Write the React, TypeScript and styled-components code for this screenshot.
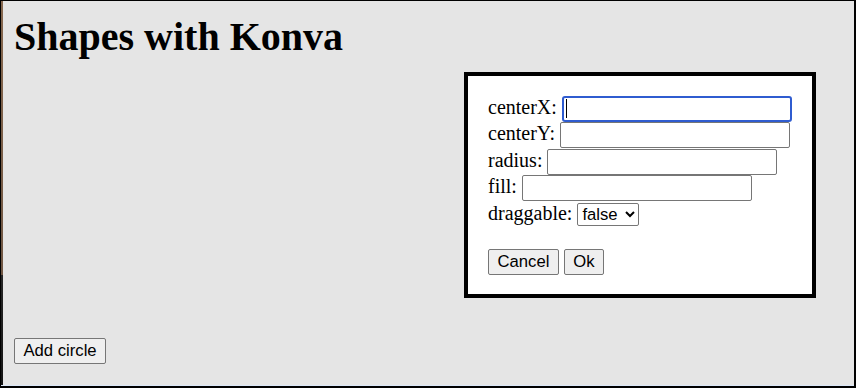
import React from 'react'
import styled, { createGlobalStyle } from 'styled-components'

const GlobalStyle = createGlobalStyle`
  html, body {
    margin: 0;
    padding: 0;
    height: 100%;
  }
  body {
    background: #e5e5e5;
    font-family: 'Liberation Serif', 'Times New Roman', serif;
    color: #000;
  }
`

const Frame = styled.div`
  box-sizing: border-box;
  height: 100vh;
  padding: 14px 11px 0 13px;
  border-top: 1px solid #000;
  border-left: 1px solid #000;
  border-right: 2px solid #000;
  border-bottom: 2px solid #000;
  box-shadow: inset 0 -1px 0 #dbe7f7;
  background:
    linear-gradient(to bottom, #86684f 0, #6f5643 274px, #262626 274px, #141414 100%) left top / 2px 100% no-repeat,
    #e5e5e5;
`

const Title = styled.h1`
  margin: 0;
  font-size: 40px;
  line-height: 44px;
  font-weight: bold;
`

const Stage = styled.div`
  position: relative;
  height: 279px;
`

const Dialog = styled.form`
  position: absolute;
  top: 13px;
  left: 450px;
  box-sizing: border-box;
  width: 352px;
  padding: 20px 20px 19px;
  border: 4px solid #000;
  background: #fff;
`

const Field = styled.div`
  display: flex;
  align-items: baseline;
  gap: 5px;
  height: 26.4px;
  font-size: 20px;
`

const Label = styled.label`
  white-space: nowrap;
`

const FocusWrap = styled.span`
  position: relative;
  display: inline-block;
`

const Caret = styled.span`
  position: absolute;
  left: 4px;
  top: 3px;
  width: 1px;
  height: 19px;
  background: #000;
`

const TextInput = styled.input<{ $focused?: boolean }>`
  box-sizing: border-box;
  width: 230px;
  height: 26px;
  margin: 0;
  padding: 1px 3px;
  border: 1px solid #767676;
  border-radius: 2px;
  background: #fff;
  font-family: 'Liberation Sans', Arial, sans-serif;
  font-size: 16.67px;
  outline: none;
  ${p => p.$focused && `
    border: 2px solid #2f5cd0;
    border-radius: 3px;
  `}
`

const Select = styled.select`
  box-sizing: border-box;
  width: 62px;
  height: 23px;
  margin: 0;
  border: 1px solid #767676;
  border-radius: 2px;
  background: #fff;
  color: #000;
  font-family: 'Liberation Sans', Arial, sans-serif;
  font-size: 16.67px;
`

const Actions = styled.div`
  display: flex;
  gap: 5px;
  margin-top: 21px;
`

const Button = styled.button`
  box-sizing: border-box;
  height: 26px;
  margin: 0;
  padding: 0 8.5px;
  border: 1px solid #767676;
  border-radius: 2px;
  background: #efefef;
  color: #000;
  font-family: 'Liberation Sans', Arial, sans-serif;
  font-size: 16.67px;
`

const fields = ['centerX', 'centerY', 'radius', 'fill']

export default function App() {
  return (
    <>
      <GlobalStyle />
      <Frame>
        <Title>Shapes with Konva</Title>
        <Stage>
          <Dialog onSubmit={e => e.preventDefault()}>
            {fields.map((name, i) => (
              <Field key={name}>
                <Label htmlFor={name}>{name}:</Label>
                {i === 0 ? (
                  <FocusWrap>
                    <TextInput id={name} $focused />
                    <Caret />
                  </FocusWrap>
                ) : (
                  <TextInput id={name} />
                )}
              </Field>
            ))}
            <Field>
              <Label htmlFor="draggable">draggable:</Label>
              <Select id="draggable" defaultValue="false">
                <option value="false">false</option>
                <option value="true">true</option>
              </Select>
            </Field>
            <Actions>
              <Button type="button">Cancel</Button>
              <Button type="submit">Ok</Button>
            </Actions>
          </Dialog>
        </Stage>
        <Button type="button">Add circle</Button>
      </Frame>
    </>
  )
}
